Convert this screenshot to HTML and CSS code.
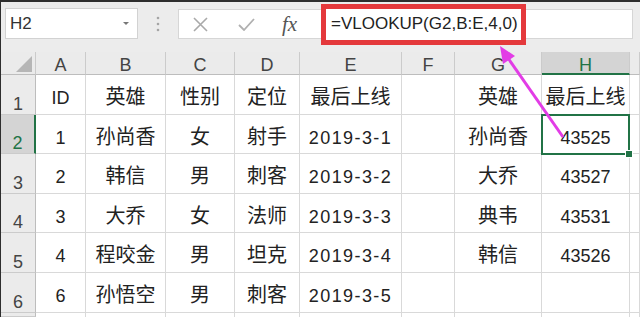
FILE: index.html
```html
<!DOCTYPE html>
<html lang="zh">
<head>
  <meta charset="UTF-8" />
  <title>VLOOKUP</title>
  <link rel="stylesheet" href="styles.css">
</head>
<body>
  <div class="app">
    <div class="toolbar">
      <div class="name-box">
        <span>H2</span>
        <span class="caret"></span>
      </div>
      <div class="grip">
        <svg width="4" height="16" viewBox="0 0 4 16"><circle cx="2" cy="2" r="1.3" fill="#a5a5a5"/><circle cx="2" cy="8" r="1.3" fill="#a5a5a5"/><circle cx="2" cy="14" r="1.3" fill="#a5a5a5"/></svg>
      </div>
      <div class="formula-bar">
        <svg class="fb-cancel" width="15" height="15" viewBox="0 0 15 15"><path d="M1 1 L14 14 M14 1 L1 14" stroke="#a9a9a9" stroke-width="1.6" fill="none"/></svg>
        <svg class="fb-enter" width="17" height="13" viewBox="0 0 17 13"><path d="M1 7 L6 12 L16 1" stroke="#b0b0b0" stroke-width="1.8" fill="none"/></svg>
        <span class="fx">fx</span>
        <div class="formula">=VLOOKUP(G2,B:E,4,0)</div>
      </div>
    </div>

    <div class="sheet">
      <div class="hd corner"><span class="tri"></span></div>
      <div class="hd">A</div>
      <div class="hd">B</div>
      <div class="hd">C</div>
      <div class="hd">D</div>
      <div class="hd">E</div>
      <div class="hd">F</div>
      <div class="hd">G</div>
      <div class="hd hd-on">H</div>
      <div class="hd"></div>

      <div class="rh">1</div>
      <div class="c">ID</div>
      <div class="c zh">英雄</div>
      <div class="c zh">性别</div>
      <div class="c zh">定位</div>
      <div class="c zh">最后上线</div>
      <div class="c"></div>
      <div class="c zh">英雄</div>
      <div class="c zh">最后上线</div>
      <div class="c"></div>

      <div class="rh rh-on">2</div>
      <div class="c">1</div>
      <div class="c zh">孙尚香</div>
      <div class="c zh">女</div>
      <div class="c zh">射手</div>
      <div class="c dt">2019-3-1</div>
      <div class="c"></div>
      <div class="c zh">孙尚香</div>
      <div class="c active">43525</div>
      <div class="c"></div>

      <div class="rh">3</div>
      <div class="c">2</div>
      <div class="c zh">韩信</div>
      <div class="c zh">男</div>
      <div class="c zh">刺客</div>
      <div class="c dt">2019-3-2</div>
      <div class="c"></div>
      <div class="c zh">大乔</div>
      <div class="c">43527</div>
      <div class="c"></div>

      <div class="rh">4</div>
      <div class="c">3</div>
      <div class="c zh">大乔</div>
      <div class="c zh">女</div>
      <div class="c zh">法师</div>
      <div class="c dt">2019-3-3</div>
      <div class="c"></div>
      <div class="c zh">典韦</div>
      <div class="c">43531</div>
      <div class="c"></div>

      <div class="rh">5</div>
      <div class="c">4</div>
      <div class="c zh">程咬金</div>
      <div class="c zh">男</div>
      <div class="c zh">坦克</div>
      <div class="c dt">2019-3-4</div>
      <div class="c"></div>
      <div class="c zh">韩信</div>
      <div class="c">43526</div>
      <div class="c"></div>

      <div class="rh">6</div>
      <div class="c">6</div>
      <div class="c zh">孙悟空</div>
      <div class="c zh">男</div>
      <div class="c zh">刺客</div>
      <div class="c dt">2019-3-5</div>
      <div class="c"></div>
      <div class="c"></div>
      <div class="c"></div>
      <div class="c"></div>

      <div class="rh"></div>
      <div class="c"></div>
      <div class="c"></div>
      <div class="c"></div>
      <div class="c"></div>
      <div class="c"></div>
      <div class="c"></div>
      <div class="c"></div>
      <div class="c"></div>
      <div class="c"></div>
    </div>

    <!-- annotation arrow pointing at the formula -->
    <svg class="arrow" width="640" height="317" viewBox="0 0 640 317">
      <line x1="563" y1="137" x2="508" y2="58" stroke="#e23ce6" stroke-width="3"/>
      <polygon points="500,46 515,56 503,64" fill="#e23ce6"/>
    </svg>
  </div>
</body>
</html>
```

FILE: styles.css
```css
body {
  margin: 0;
  font-family: "Liberation Sans", "Noto Sans CJK SC", sans-serif;
  background: #ffffff;
  color: #222;
}

.app {
  position: relative;
  width: 640px;
  height: 317px;
  overflow: hidden;
  box-sizing: border-box;
  border-top: 2px solid #2e2e2e;
  border-left: 1px solid #2e2e2e;
}

/* formula bar row */
.toolbar {
  height: 50px;
  box-sizing: border-box;
  padding: 6px 0 0 4px;
  background: #ececec;
  display: flex;
  align-items: flex-start;
}

.name-box {
  width: 133px;
  height: 31px;
  box-sizing: border-box;
  background: #fff;
  border: 1px solid #d2d2d2;
  display: flex;
  align-items: center;
  justify-content: space-between;
  padding: 0 8px 0 4px;
  font-size: 17px;
  color: #333;
}

.caret {
  width: 0;
  height: 0;
  border-left: 3px solid transparent;
  border-right: 3px solid transparent;
  border-top: 3px solid #777;
}

.grip {
  width: 40px;
  height: 31px;
  display: flex;
  align-items: center;
  justify-content: center;
}

.formula-bar {
  width: 455px;
  height: 30px;
  margin-top: 1px;
  box-sizing: border-box;
  background: #fff;
  border: 1px solid #d6d6d6;
  display: flex;
  align-items: center;
}

.fb-cancel {
  margin-left: 14px;
}

.fb-enter {
  margin-left: 30px;
}

.fx {
  margin-left: 27px;
  width: 18px;
  font-family: "Liberation Serif", serif;
  font-style: italic;
  font-size: 21px;
  color: #555;
}

.formula {
  margin-left: 21px;
  width: 205px;
  height: 41px;
  flex-shrink: 0;
  box-sizing: border-box;
  border: 5px solid #e4393c;
  background: #fff;
  display: flex;
  align-items: center;
  padding-left: 5px;
  font-size: 17px;
  color: #222;
  white-space: nowrap;
}

/* grid */
.sheet {
  display: grid;
  grid-template-columns: 35px 50px 80px 69px 65px 102px 53px 87px 88px 10px;
  grid-template-rows: 23px 40px 39px 40px 39px 40px 40px 4px;
}

.hd {
  background: #ebebeb;
  border-right: 1px solid #cbcbcb;
  border-bottom: 1px solid #bdbdbd;
  display: flex;
  justify-content: center;
  align-items: flex-start;
  padding-top: 3px;
  box-sizing: border-box;
  line-height: 20px;
  font-size: 18px;
  color: #444;
}

.hd-on {
  background: #d4d4d4;
  border-bottom: 2px solid #217346;
  color: #217346;
}

.corner {
  justify-content: flex-end;
  align-items: flex-end;
  padding: 0 3px 2px 0;
}

.tri {
  width: 0;
  height: 0;
  border-left: 16px solid transparent;
  border-bottom: 16px solid #b6b6b6;
}

.rh {
  background: #ebebeb;
  border-right: 1px solid #bdbdbd;
  border-bottom: 1px solid #cbcbcb;
  display: flex;
  justify-content: center;
  align-items: flex-end;
  box-sizing: border-box;
  line-height: 20px;
  font-size: 18px;
  color: #444;
}

.rh-on {
  background: #d4d4d4;
  border-right: 2px solid #217346;
  color: #217346;
}

.c {
  border-right: 1px solid #d9d9d9;
  border-bottom: 1px solid #d9d9d9;
  box-sizing: border-box;
  display: flex;
  justify-content: center;
  align-items: flex-start;
  padding-top: 13px;
  line-height: 20px;
  font-size: 18px;
  white-space: nowrap;
}

.zh {
  font-family: "Noto Sans CJK SC", sans-serif;
  font-size: 20px;
  padding-top: 11px;
}

.dt {
  letter-spacing: 1.4px;
}

.active {
  position: relative;
}

.active::after {
  content: "";
  position: absolute;
  top: -1px;
  left: -1px;
  right: -1px;
  bottom: -2px;
  border: 2px solid #217346;
}

.active::before {
  content: "";
  position: absolute;
  right: -4px;
  bottom: -5px;
  width: 6px;
  height: 6px;
  background: #217346;
  border: 1px solid #fff;
  z-index: 1;
}

.arrow {
  position: absolute;
  left: -1px;
  top: -2px;
  pointer-events: none;
}
```
